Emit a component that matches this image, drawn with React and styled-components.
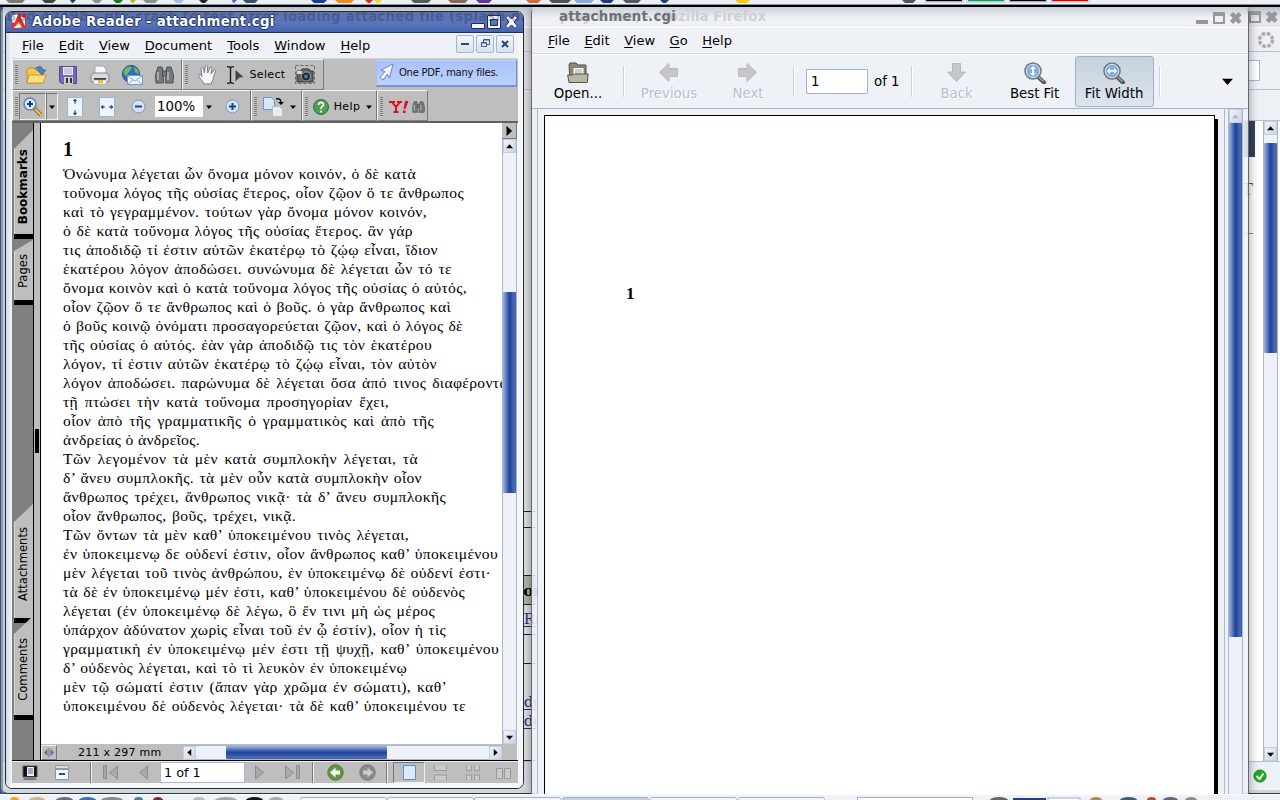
import styled, { createGlobalStyle, css } from 'styled-components';

const GlobalStyle = createGlobalStyle`
  * {
    box-sizing: border-box;
  }
  body {
    margin: 0;
    overflow: hidden;
    font-family: 'DejaVu Sans', sans-serif;
    font-size: 13.33px;
    color: #000;
  }
  svg {
    display: block;
    flex: none;
  }
  u {
    text-underline-offset: 2px;
  }
`;

const Desktop = styled.div`
  position: relative;
  width: 1280px;
  height: 800px;
  overflow: hidden;
  background: #35597f;
`;

/* panels */

const Panel = styled.div`
  position: absolute;
  left: 0;
  right: 0;
  z-index: 5;
  overflow: hidden;
  ${({ $bottom }) =>
    $bottom
      ? css`
          bottom: 0;
          height: 6px;
          background: #eef2f7;
          border-top: 1px solid #fff;
        `
      : css`
          top: 0;
          height: 7px;
          background: #eceff4;
          border-bottom: 2px solid #000;
          box-shadow: inset 0 -1px #7f93ab;
        `}
`;

/* shared window pieces */

const Scroll = styled.div`
  display: flex;
  flex: none;
  flex-direction: ${({ $row }) => ($row ? 'row' : 'column')};
  ${({ $row }) => ($row ? 'height: 15px;' : 'width: 15px;')}
  background: #edf1f7;
  border: 0 solid #a8b8d2;
  border-width: ${({ $row }) => ($row ? '1px 0' : '0 1px')};
`;

const Arrow = styled.div`
  flex: none;
  width: 13px;
  height: 14px;
  display: flex;
  align-items: center;
  justify-content: center;
  background: linear-gradient(135deg, #f4f7fa, #c9d3df);
  box-shadow: inset 0 0 0 1px #c3cfdd;
`;

const Track = styled.div`
  flex: 0 0 ${({ $size }) => $size}px;
`;

const Thumb = styled.div`
  flex: 0 0 ${({ $size }) => $size}px;
  border-radius: 1px;
  background: linear-gradient(
    ${({ $row }) => ($row ? '180deg' : '90deg')},
    #9db1d9 0%,
    #6c88c4 20%,
    #2448a0 46%,
    #2448a0 58%,
    #4c6ab2 85%,
    #3f5ea9 100%
  );
`;

const Spacer = styled.div`
  flex: 1;
`;

function Tri({ dir = 'down', color = '#000', size = 7 }) {
  const turn = { down: 0, left: 90, up: 180, right: 270 }[dir];
  return (
    <svg width={size} height={size} viewBox="0 0 8 8">
      <path
        d="M0 2h8L4 6.5z"
        fill={color}
        transform={`rotate(${turn} 4 4)`}
      />
    </svg>
  );
}

function Bar({ row, before, thumb, dim }) {
  return (
    <Scroll $row={row}>
      <Arrow>
        <Tri dir={row ? 'left' : 'up'} color={dim ? '#aebccb' : '#000'} />
      </Arrow>
      <Track $size={before} />
      <Thumb $size={thumb} $row={row} />
      <Spacer />
      <Arrow>
        <Tri dir={row ? 'right' : 'down'} />
      </Arrow>
    </Scroll>
  );
}

const WindowButtons = ({ children }) => (
  <svg width="50" height="16" viewBox="0 0 50 16">
    {children}
  </svg>
);

const DimButtons = () => (
  <WindowButtons>
    <path d="M2 11h12v4H2z" fill="#96989b" />
    <path fillRule="evenodd" d="M19 3h12v12H19zM21 7v6h8V7z" fill="#96989b" />
    <path d="M37.500 4.500l8.500 9M46 4.500l-8.500 9" stroke="#96989b" strokeWidth="4.500" />
  </WindowButtons>
);

const BrightButtons = () => (
  <WindowButtons>
    <path d="M1.500 10.500h13v5h-13z" fill="#f4f6fa" stroke="#1d2c58" />
    <path
      fillRule="evenodd"
      d="M17.500 2.500h13v13h-13zM20.500 6.500v6h7v-6z"
      fill="#f4f6fa"
      stroke="#1d2c58"
    />
    <path
      d="M35.500 5l2.500-2.500 3.500 3.500 3.500-3.500L47.500 5 44 9l3.500 4-2.500 2.500-3.500-3.500-3.500 3.500L35.500 13 39 9z"
      fill="#f4f6fa"
      stroke="#1d2c58"
    />
  </WindowButtons>
);

/* firefox window in the back */

const FirefoxWindow = styled.div`
  position: absolute;
  left: 1px;
  top: 7px;
  width: 1279px;
  height: 787px;
  display: flex;
  flex-direction: column;
  padding-bottom: 4px;
  background: #cdd4dc;
  border-left: 2px solid #8e98a6;
  border-radius: 6px 0 0 6px;
  border-bottom: 1px solid #30363d;
`;

const FirefoxTitle = styled.div`
  flex: none;
  height: 21px;
  display: flex;
  align-items: center;
  padding: 0 0 2px;
  background: linear-gradient(#b8c1cb, #e4e8ee 60%);
  border-bottom: 1px solid #f9fafb;
`;

const FirefoxBar = styled.div`
  flex: none;
  height: ${({ $h }) => $h}px;
  display: flex;
  align-items: center;
  justify-content: flex-end;
  padding-right: ${({ $pr }) => $pr}px;
  border-bottom: 1px solid #b5c0cd;
  background: linear-gradient(90deg, #dde0e4 80%, #edf0f5 98.5%);
`;

const UrlEnd = styled.div`
  width: 40px;
  height: 21px;
  background: #fff;
  border: 1px solid #a8b8d2;
`;

const FirefoxPage = styled.div`
  flex: 1;
  display: flex;
  justify-content: space-between;
  background: linear-gradient(90deg, #c3cad6 10px, #fff 10px);
  padding: 0 2px 0 10px;
`;

const PageLeft = styled.div`
  width: 535px;
  margin-top: -25px;
  background: #dfdfdf;
`;

const PageRow = styled.div`
  height: ${({ $h }) => $h}px;
  padding: ${({ $top }) => $top || 0}px 0 0 ${({ $indent }) => $indent || 506}px;
  border-bottom: 1px solid #222;
  background: ${({ $head }) => ($head ? '#b2b2b2' : 'transparent')};
  font-family: 'DejaVu Serif', serif;
  font-size: 15px;
  line-height: 19px;
  font-weight: ${({ $head }) => ($head ? 'bold' : 'normal')};
  white-space: nowrap;
  overflow: hidden;
  u {
    color: #12388c;
    display: block;
  }
`;

const PageRight = styled.div`
  display: flex;
`;

const PageEdge = styled.div`
  width: 30px;
  margin-right: 8px;
  font-family: 'DejaVu Serif', serif;
  font-size: 16px;
  text-align: right;
  padding-right: 2px;
  &::before {
    content: '';
    display: block;
    height: 36px;
    margin-right: -2px;
    background: #344260;
  }
  div {
    height: 77px;
    padding-top: 23px;
    color: #555;
    border-bottom: 1px solid #888;
  }
`;

const FirefoxStatus = styled.div`
  flex: none;
  height: 29px;
  display: flex;
  align-items: center;
  justify-content: flex-end;
  padding-right: 13px;
  border-top: 1px solid #b8c2cd;
  background: linear-gradient(90deg, #d5d9de 80%, #edf0f5 98.5%);
`;

/* document viewer */

const ViewerWindow = styled.div`
  position: absolute;
  left: 531px;
  top: 7px;
  width: 718px;
  height: 787px;
  display: flex;
  flex-direction: column;
  border: 1px solid #666a6e;
  border-width: 0 1px;
  border-radius: 6px 6px 0 0;
  background: linear-gradient(
    90deg,
    rgba(238, 242, 247, 0.78),
    #eef2f7 7px,
    #eef2f7 708px,
    rgba(238, 242, 247, 0.85)
  );
  box-shadow: 0 0 10px rgba(0, 0, 0, 0.4);
`;

const ViewerTitle = styled.div`
  flex: none;
  height: 21px;
  display: flex;
  align-items: center;
  padding: 0 4px 1px 0;
  font-weight: bold;
  white-space: pre;
  color: #6f7174;
  background: linear-gradient(#c8cfd6, rgba(238, 242, 247, 0.1) 55%);
  border-bottom: 1px solid #fff;
  span {
    margin-left: 27px;
    letter-spacing: 0.22px;
    z-index: 1;
  }
  i {
    width: 234px;
    margin-right: -234px;
    font-style: normal;
    text-align: right;
    color: #cdd0d5;
  }
`;

const Menu = styled.div`
  flex: none;
  height: ${({ $h }) => $h}px;
  display: flex;
  align-items: center;
  gap: ${({ $gap }) => $gap || 15}px;
  padding: 0 4px ${({ $pb }) => $pb || 0}px ${({ $left }) => $left}px;
  font-size: 13px;
  background: #eef2f7;
  border-bottom: 1px solid #cfd7e1;
`;

const ViewerTools = styled.div`
  flex: none;
  height: 55px;
  display: flex;
  align-items: center;
  padding-left: 14px;
  border-top: 1px solid #fff;
  border-bottom: 1px solid #a5b5c5;
  background: #eef2f7;
`;

const BigButton = styled.div`
  flex: none;
  width: ${({ $w }) => $w}px;
  margin-left: ${({ $ml }) => $ml || 0}px;
  height: 51px;
  display: flex;
  flex-direction: column;
  align-items: center;
  padding-top: 5px;
  line-height: 16px;
  border: 1px solid transparent;
  border-radius: 3px;
  svg {
    margin-bottom: 2px;
  }
  ${({ $off }) =>
    $off &&
    css`
      color: #b3c0ce;
      text-shadow: 1px 1px #fff;
    `}
  ${({ $on }) =>
    $on &&
    css`
      border-color: #9fb0c8;
      background: linear-gradient(#c6d1dd, #dde6ef);
    `}
`;

const Divider = styled.div`
  flex: none;
  width: 2px;
  height: 31px;
  margin-left: ${({ $ml }) => $ml}px;
  border-left: 1px solid #cbd4de;
  background: #fff;
`;

const PageInput = styled.div`
  width: 62px;
  height: 25px;
  margin: 0 6px 1px 11px;
  padding: 3px 4px;
  line-height: 17px;
  background: #fff;
  border: 1px solid #a2b2d2;
  border-radius: 1px;
`;

const ViewerBody = styled.div`
  flex: 1;
  min-height: 0;
  display: flex;
  margin: 0 5px;
`;

const ViewerPane = styled.div`
  width: 688px;
  padding: 6px 6px 0 6px;
  border: 1px solid #a8b8d2;
  border-width: 0 1px;
  margin-right: 3px;
`;

const Sheet = styled.div`
  height: 100%;
  width: 671px;
  padding: 168px 0 0 81px;
  background: #fff;
  border: 1px solid #000;
  border-bottom: 0;
  box-shadow: 3px 4px #000;
  clip-path: inset(0 -4px 0 0);
  font: bold 17px/20px 'Liberation Serif', serif;
`;

/* adobe reader */

const ReaderWindow = styled.div`
  position: absolute;
  left: 5px;
  top: 11px;
  width: 519px;
  height: 778px;
  z-index: 3;
  display: flex;
  flex-direction: column;
  border: 1px solid #252a33;
  border-radius: 7px;
  overflow: hidden;
  background: #eef2f7;
`;

const ReaderTitle = styled.div`
  flex: none;
  height: 21px;
  display: flex;
  align-items: center;
  padding: 0 3px 2px 6px;
  color: #fff;
  font-weight: bold;
  letter-spacing: 0.28px;
  background: linear-gradient(#5d72ab, #5b75bd 55%, #4763af);
  border-bottom: 1px solid #1f2f55;
  text-shadow:
    1px 0 #26386b,
    -1px 0 #26386b,
    0 1px #26386b,
    0 -1px #26386b;
  span {
    margin-left: 6px;
    z-index: 1;
  }
`;

const Ghost = styled.div`
  position: absolute;
  top: -4px;
  left: 0;
  width: 741px;
  height: 18px;
  line-height: 18px;
  text-align: right;
  white-space: pre;
  font-weight: bold;
  letter-spacing: 0.25px;
  text-shadow: none;
  color: rgba(25, 35, 70, 0.3);
`;

const ReaderBody = styled.div`
  flex: 1;
  display: flex;
  flex-direction: column;
  padding: 0 5px 5px 6px;
  background: linear-gradient(90deg, #d2d9e4, #f4f6fa 6px);
`;

const MdiButton = styled.div`
  width: 18px;
  height: 18px;
  display: flex;
  align-items: center;
  justify-content: center;
  border: 1px solid #a7b6cd;
  border-radius: 2px;
  background: linear-gradient(#f5f7fa, #d8e0ea);
`;

const MdiGroup = styled.div`
  display: flex;
  gap: 2px;
  margin: 0 0 3px auto;
`;

const ToolRow = styled.div`
  flex: none;
  height: 31px;
  display: flex;
  align-items: stretch;
  background: #bebebe;
`;

const Group = styled.div`
  flex: none;
  width: ${({ $w }) => $w}px;
  display: flex;
  align-items: center;
  padding-top: ${({ $low }) => ($low ? 2 : 0)}px;
  font-size: 11px;
  border: 1px solid;
  border-color: #f4f4f4 #777 #808080 #f4f4f4;
`;

const Grip = styled.div`
  flex: none;
  width: 3px;
  height: 20px;
  margin: 0 1px 0 2px;
  background: repeating-linear-gradient(#777 0 1px, #c8c8c8 1px 2px);
`;

const Slot = styled.div`
  flex: none;
  width: ${({ $w }) => $w}px;
  height: ${({ $pressed }) => ($pressed ? `${$pressed}px` : 'auto')};
  margin-left: ${({ $ml }) => $ml || 0}px;
  display: flex;
  align-items: center;
  justify-content: center;
  letter-spacing: 0.35px;
  ${({ $pressed }) =>
    $pressed &&
    css`
      border: 1px solid;
      border-color: #777 #eee #eee #777;
    `}
`;

const Zoom = styled.div`
  width: 48px;
  height: 21px;
  margin-left: 1px;
  padding-left: 2px;
  line-height: 21px;
  font-size: 13.33px;
  background: #fff;
`;

const Promo = styled.div`
  width: 141px;
  height: 27px;
  margin: 1px 1px 0 auto;
  display: flex;
  align-items: center;
  gap: 5px;
  padding: 0 0 2px 2px;
  font-size: 10px;
  letter-spacing: -0.25px;
  color: #111;
  white-space: nowrap;
  background: linear-gradient(#a9c2fb, #bdd1fd);
  border: 1px solid;
  border-color: #bfd2ff #6d8fd0 #7897d0 #a3bdf5;
  border-bottom-width: 2px;
`;

const Main = styled.div`
  height: 640px;
  flex: none;
  display: flex;
  border-top: 2px solid #626262;
  border-bottom: 1px solid #000;
`;

const Tabs = styled.div`
  width: 22px;
  padding: 7px 0 0 2px;
  background: #808080;
  border-right: 1px solid #000;
`;

const Tab = styled.div`
  height: ${({ $h }) => $h}px;
  margin-top: ${({ $gap }) => $gap || 0}px;
  display: flex;
  align-items: flex-end;
  justify-content: center;
  padding-bottom: ${({ $pb }) => $pb}px;
  font-size: ${({ $bold }) => ($bold ? 12 : 11.6)}px;
  font-weight: ${({ $bold }) => ($bold ? 'bold' : 'normal')};
  background: linear-gradient(90deg, #d8d8d8 1px, #bebebe 1px);
  border-bottom: 5px solid #000;
  clip-path: polygon(
    0 ${({ $cut }) => $cut}px,
    100% 0,
    100% 100%,
    0 100%
  );
  span {
    writing-mode: vertical-rl;
    transform: rotate(180deg);
    line-height: 17px;
  }
`;

const Splitter = styled.div`
  width: 7px;
  padding: 306px 1px 0 1px;
  background: #bdbdbd;
  border-right: 1px solid #000;
  &::before {
    content: '';
    display: block;
    height: 24px;
    background: #000;
  }
`;

const PaneColumn = styled.div`
  width: 461px;
  display: flex;
  flex-direction: column;
`;

const Paper = styled.div`
  height: 621px;
  padding: 16px 0 0 22px;
  overflow: hidden;
  background: #fff;
  font-family: 'Liberation Serif', 'DejaVu Serif', serif;
`;

const Heading = styled.div`
  font-size: 20px;
  font-weight: bold;
  line-height: 20px;
  margin-bottom: 4.6px;
`;

const Line = styled.div`
  width: ${({ $w }) => $w}px;
  height: 19.04px;
  line-height: 19px;
  font-size: 15.6px;
  letter-spacing: 0.35px;
  white-space: nowrap;
  text-align-last: justify;
`;

const PaneFoot = styled.div`
  height: 16px;
  display: flex;
  align-items: center;
  background: #bebebe;
  font-size: 11px;
  letter-spacing: 0.25px;
  > span {
    width: 126px;
    padding-left: 21px;
    white-space: nowrap;
  }
`;

const SplitButton = styled.div`
  width: 16px;
  height: 15px;
  display: flex;
  align-items: center;
  justify-content: center;
  border: 1px solid;
  border-color: #eee #777 #777 #eee;
`;

const ScrollColumn = styled.div`
  width: 15px;
  display: flex;
  flex-direction: column;
  background: #bebebe;
  > ${Scroll} {
    height: 605px;
  }
`;

const HWrap = styled.div`
  width: 319px;
  > ${Scroll} {
    width: 100%;
  }
`;

const MoreButton = styled.div`
  height: 16px;
  display: flex;
  align-items: center;
  justify-content: center;
  border-right: 1px solid #777;
  border-bottom: 1px solid #777;
`;

const StatusRow = styled.div`
  height: 22px;
  display: flex;
  align-items: center;
  background: #bebebe;
  border-top: 1px solid #eee;
`;

const StatusField = styled.div`
  flex: none;
  width: 85px;
  height: 21px;
  margin-left: 5px;
  padding-left: 3px;
  line-height: 20px;
  font-size: 12.8px;
  background: #fff;
  border: 1px solid #a8b8d2;
`;

const StatusDivider = styled.div`
  flex: none;
  width: 2px;
  height: 21px;
  margin-left: ${({ $ml }) => $ml || 0}px;
  border-left: 1px solid #777;
  background: #f2f2f2;
`;

/* icons */

const OpenIcon = () => (
  <svg width="21" height="20" viewBox="0 0 21 20">
    <path d="M1 5l2-2h5l2 2h7v13H1z" fill="#f3c94d" stroke="#c1902a" />
    <path d="M3 10h17l-3 8H1z" fill="#fbe27f" stroke="#c9992e" />
    <path d="M9 4c3-4 8-3 8 1h3l-4 5-5-5h3c0-2-3-2-5-1z" fill="#4d80bd" stroke="#285a96" strokeWidth=".6" />
  </svg>
);

const SaveIcon = () => (
  <svg width="18" height="18" viewBox="0 0 18 18">
    <path d="M.5.500h17v17h-15l-2-2z" fill="#7468b8" stroke="#54488f" />
    <path d="M4 1h10v8H4z" fill="#e9e8f2" />
    <path d="M5 3h8M5 5h8M5 7h8" stroke="#aaa6c4" />
    <path d="M5 11h9v7H5z" fill="#ccc" />
    <path d="M7 12h2v5H7zM11 12h2v5h-2z" fill="#333" />
  </svg>
);

const PrintIcon = () => (
  <svg width="20" height="20" viewBox="0 0 20 20">
    <path d="M5 1h8l3 3v6H5z" fill="#f7f9fc" stroke="#9fa7b4" />
    <path d="M3 8h14l2 3v6H1v-6z" fill="#d7dae0" stroke="#85888f" />
    <path d="M4 13h12v2H4z" fill="#444" />
    <path d="M4 15h12l1 4H3z" fill="#fff" stroke="#999" strokeWidth=".6" />
    <path d="M8 15h5v3H8z" fill="#eab93a" />
  </svg>
);

const MailIcon = () => (
  <svg width="21" height="20" viewBox="0 0 21 20">
    <circle cx="9" cy="9" r="8.500" fill="#2d70ba" stroke="#1c4b82" />
    <path d="M3 4c3-3 6-3 7-1L7 7l-3 4c-3-2-3-5-1-7zM12 2c4 1 5 5 5 7l-4-2z" fill="#75b366" />
    <path d="M5.500 10.500h15v9h-15z" fill="#f3f8fd" stroke="#6f9ccd" />
    <path d="M6 11l7 5 7-5M6 19l5-4M20 19l-5-4" stroke="#7fa8d4" fill="none" />
  </svg>
);

const BinocularsIcon = ({ w = 19, h = 18 }) => (
  <svg width={w} height={h} viewBox="0 0 19 18">
    <g fill="#76797c" stroke="#4f5254">
      <path d="M3 1h4l1 4 .5 12H1L.5 9zM12 1h4l2.500 8-.5 8h-7.500L11 5z" />
      <path d="M7.500 5h4v5h-4z" />
    </g>
    <path d="M3 6v8M13 6v8" stroke="#b9bcbf" strokeWidth="1.500" />
  </svg>
);

const HandIcon = () => (
  <svg width="19" height="20" viewBox="0 0 19 20">
    <path
      d="M6 19c-1-3-5-6-5.500-9 0-1.500 2-1 3.500 1.500L3 4c0-2 2-2 2.500 0l1 4L7 2c0-2 2.500-2 2.500 0l.2 6L12 3c.5-2 2.500-1 2 .5L13 9l2.500-3.500c1-1.500 2.800-.5 2 1-1 2-2 5-2.500 8l-2 4.500z"
      fill="#f6f6f8"
      stroke="#777b86"
    />
  </svg>
);

const SelectIcon = () => (
  <svg width="17" height="18" viewBox="0 0 17 18">
    <path d="M0 .7c2 0 3.500 0 3.500 1.300v14C3.500 17.300 2 17.300 0 17.300M7 .7C5 .7 3.500.7 3.500 2M3.500 16c0 1.300 1.500 1.300 3.500 1.300" fill="none" stroke="#111" strokeWidth="1.300" />
    <path d="M8.500 4l8 7-4 .5-4 4z" fill="#444" />
  </svg>
);

const SnapshotIcon = () => (
  <svg width="21" height="20" viewBox="0 0 21 20">
    <path d="M.5.500h19v18H.5z" fill="none" stroke="#666" strokeDasharray="3 2" />
    <path d="M2 6h4l1-2h7l1 2h3v11H2z" fill="#62666d" stroke="#333" />
    <path d="M2 6h5v3H2z" fill="#d7dadd" />
    <circle cx="11" cy="11.500" r="4.500" fill="#20242a" stroke="#9da2aa" />
    <circle cx="11" cy="11.500" r="2" fill="#5277b4" />
  </svg>
);

const ZoomInIcon = () => (
  <svg width="20" height="20" viewBox="0 0 20 20">
    <path d="M11 11l7 7" stroke="#9b6d20" strokeWidth="4" />
    <path d="M12 12l6 6" stroke="#f0c24c" strokeWidth="2" />
    <circle cx="7" cy="7" r="6" fill="#dbe9fb" stroke="#6183b4" strokeWidth="1.500" />
    <path d="M7 4v6M4 7h6" stroke="#173f83" strokeWidth="2" />
  </svg>
);

const FitIcon = ({ wide }) => (
  <svg width="17" height="20" viewBox="0 0 17 20">
    <path d="M.5.500h15v19H.5z" fill="#edf4fd" stroke="#9bb4d6" />
    <g stroke="#245592" fill="#245592">
      {wide ? (
        <path d="M2 10h4M14 10h-4M2 10l2-1.500v3zM14 10l-2-1.500v3z" />
      ) : (
        <path d="M8 2v5M8 18v-5M8 2L6.500 4h3zM8 18l-1.500-2h3z" />
      )}
    </g>
  </svg>
);

const RoundSign = ({ plus }) => (
  <svg width="15" height="15" viewBox="0 0 15 15">
    <circle cx="7.500" cy="7.500" r="6.500" fill="#d4e2f5" stroke="#8099be" />
    <path d={plus ? 'M7.500 4v7M4 7.500h7' : 'M4 7.500h7'} stroke="#174391" strokeWidth="2" />
  </svg>
);

const RotateIcon = () => (
  <svg width="21" height="20" viewBox="0 0 21 20">
    <path d="M.5.500h8l3 3v9H.5z" fill="#d7e6fa" stroke="#6f93c2" />
    <path d="M9.500 9.500h7l3 3v7h-10z" fill="#ededed" stroke="#bbb" />
    <path d="M13 2c4-1 5 1 5 4" fill="none" stroke="#111" strokeWidth="1.500" />
    <path d="M15 5h6l-3 3z" />
  </svg>
);

const HelpIcon = () => (
  <svg width="16" height="16" viewBox="0 0 16 16">
    <circle cx="8" cy="8" r="7.500" fill="#4b9e52" stroke="#2d7235" />
    <path d="M5.500 6c0-3.500 5-3.500 5-.5C10.500 7.500 8 7.500 8 10M8 11.500v2" fill="none" stroke="#fff" strokeWidth="1.700" />
  </svg>
);

const YahooIcon = () => (
  <svg width="20" height="12" viewBox="0 0 20 12">
    <path d="M0 1h6M8 1h5M3 1l4 5 4-5M7 6v5M4.500 11h5" fill="none" stroke="#e00d24" strokeWidth="2" />
    <path d="M16 0h3.500L16.500 8h-2zM14 9.500h2.500V12H14z" fill="#e00d24" />
  </svg>
);

const AdobeIcon = () => (
  <svg width="14" height="15" viewBox="0 0 14 15">
    <path d="M0 1l14-1v14l-14 1z" fill="#e23322" />
    <path d="M0 1l6-.5L2.500 9 0 8z" fill="#fff" />
    <path d="M8.500 2.500L13 4v8z" fill="#fff" />
    <path d="M1.500 14l5-6 3.500 5.500z" fill="#fff" />
    <path d="M3 12.500l3.500-3.500" stroke="#e23322" />
  </svg>
);

const CursorIcon = () => (
  <svg width="15" height="18" viewBox="0 0 15 18">
    <path d="M14 1L2 7l4 1.500-5 6L4 17l4.500-6 2 4z" fill="#f4f5ff" stroke="#7880c9" />
  </svg>
);

const FolderIcon = () => (
  <svg width="22" height="22" viewBox="0 0 22 22">
    <path d="M3 17L2 3l1-2h6l2 2h8v14z" fill="#8d8c78" stroke="#4c4b40" />
    <path d="M6 5.500h11v10H6z" fill="#fff" stroke="#777" />
    <path d="M8 8h7M8 10h7M8 12h7" stroke="#999" />
    <path d="M.7 13h6l1-1h13.500l-1 8.500H2z" fill="#b9b8a5" stroke="#555447" />
  </svg>
);

const BigArrow = ({ turn = 0 }) => (
  <svg width="22" height="22" viewBox="0 0 22 22">
    <path
      d="M1.500 10.500L11 1.500v5h8.500v8H11v5z"
      fill="#c5c7ca"
      stroke="#b6b9bd"
      transform={`rotate(${turn} 10.500 10.500)`}
    />
  </svg>
);

const LensIcon = ({ wide }) => (
  <svg width="24" height="22" viewBox="0 0 24 22">
    <path d="M14 14l7 6.500" stroke="#555850" strokeWidth="4" strokeLinecap="round" />
    <path d="M16 15.500l4.500 4" stroke="#a5a79e" strokeWidth="1.500" />
    <circle cx="10" cy="9" r="8" fill="#85aee0" stroke="#777b76" strokeWidth="1.600" />
    <circle cx="10" cy="9" r="6.700" fill="none" stroke="#d3e3f7" />
    <path
      d="M5 9l3-3v2h4V6l3 3-3 3v-2H8v2z"
      fill="#fff"
      transform={wide ? undefined : 'rotate(90 10 9)'}
    />
  </svg>
);

const ScreenIcon = () => (
  <svg width="17" height="16" viewBox="0 0 17 16">
    <path d="M1 1h14v11H1z" fill="#111" stroke="#555" />
    <path d="M5 2h7v9H5z" fill="#eef" />
    <path d="M6 4h5M6 6h5M6 8h5" stroke="#567" />
    <path d="M3 13h10l2 2H1z" fill="#777" />
  </svg>
);

const FormIcon = () => (
  <svg width="14" height="15" viewBox="0 0 14 15">
    <path d="M.5.500h13v3H.5z" fill="#ddd" stroke="#999" />
    <path d="M.5 4.500h13v10H.5z" fill="#f5f8ff" stroke="#8994a7" />
    <path d="M4 9h6" stroke="#274f9a" strokeWidth="2" />
  </svg>
);

const StepIcon = ({ flip, end }) => (
  <svg width="16" height="15" viewBox="0 0 16 15">
    <g transform={flip ? 'translate(16 0) scale(-1 1)' : undefined} stroke="#8c8c8c" fill="#aaa">
      {end && <path d="M.5.500h3v13h-3z" />}
      <path d={end ? 'M14.500 1v13l-8-6.500z' : 'M12.500 1v13l-8-6.500z'} />
    </g>
  </svg>
);

const NavIcon = ({ on, flip }) => (
  <svg width="17" height="17" viewBox="0 0 17 17">
    <circle cx="8.500" cy="8.500" r="7.700" fill={on ? '#5a9a39' : '#8b8b8b'} stroke={on ? '#4a7a35' : '#777'} />
    <path
      d="M3 8.500L8.500 3.500v3H13v4H8.500v3z"
      fill={on ? '#fff' : '#ccc'}
      transform={flip ? 'rotate(180 8.500 8.500)' : undefined}
    />
  </svg>
);

const SinglePage = () => (
  <svg width="13" height="15" viewBox="0 0 13 15">
    <path d="M.5.500h12v14H.5z" fill="#dceafd" stroke="#5d8dcc" />
  </svg>
);

const Layout = ({ d }) => (
  <svg width="16" height="16" viewBox="0 0 16 16">
    <path d={d} fill="#cacaca" stroke="#999" />
  </svg>
);

const Throbber = () => (
  <svg width="18" height="18" viewBox="0 0 18 18">
    <circle cx="9" cy="9" r="6.500" fill="none" stroke="#a9abad" strokeWidth="3.400" strokeDasharray="3.500 1.600" />
  </svg>
);

const CheckIcon = () => (
  <svg width="14" height="14" viewBox="0 0 14 14">
    <circle cx="7" cy="7" r="6" fill="#1bb01b" stroke="#0b8610" />
    <path d="M3.500 7l3 3 4-5.500" fill="none" stroke="#fff" strokeWidth="2" />
  </svg>
);

/* content */

const GHOST_TITLE =
  'Bug 47498 - gtk-crash to test error loading attached file (splash,display issue) - Mozilla Firefox';

// [text, set width]
const lines = [
  ['Ὁνώνυμα λέγεται ὧν ὄνομα μόνον κοινόν, ὁ δὲ κατὰ', 353],
  ['τοὔνομα λόγος τῆς οὐσίας ἕτερος, οἷον ζῷον ὅ τε ἄνθρωπος', 401],
  ['καὶ τὸ γεγραμμένον. τούτων γὰρ ὄνομα μόνον κοινόν,', 364],
  ['ὁ δὲ κατὰ τοὔνομα λόγος τῆς οὐσίας ἕτερος. ἂν γάρ', 350],
  ['τις ἀποδιδῷ τί ἐστιν αὐτῶν ἑκατέρῳ τὸ ζῴῳ εἶναι, ἴδιον', 375],
  ['ἑκατέρου λόγον ἀποδώσει. συνώνυμα δὲ λέγεται ὧν τό τε', 389],
  ['ὄνομα κοινὸν καὶ ὁ κατὰ τοὔνομα λόγος τῆς οὐσίας ὁ αὐτός,', 404],
  ['οἷον ζῷον ὅ τε ἄνθρωπος καὶ ὁ βοῦς. ὁ γὰρ ἄνθρωπος καὶ', 388],
  ['ὁ βοῦς κοινῷ ὀνόματι προσαγορεύεται ζῷον, καὶ ὁ λόγος δὲ', 400],
  ['τῆς οὐσίας ὁ αὐτός. ἐὰν γὰρ ἀποδιδῷ τις τὸν ἑκατέρου', 369],
  ['λόγον, τί ἐστιν αὐτῶν ἑκατέρῳ τὸ ζῴῳ εἶναι, τὸν αὐτὸν', 374],
  ['λόγον ἀποδώσει. παρώνυμα δὲ λέγεται ὅσα ἀπό τινος διαφέροντα', 445],
  ['τῇ πτώσει τὴν κατὰ τοὔνομα προσηγορίαν ἔχει,', 326],
  ['οἷον ἀπὸ τῆς γραμματικῆς ὁ γραμματικὸς καὶ ἀπὸ τῆς', 371],
  ['ἀνδρείας ὁ ἀνδρεῖος.', 137],
  ['Τῶν λεγομένον τὰ μὲν κατὰ συμπλοκὴν λέγεται, τὰ', 355],
  ['δ’ ἄνευ συμπλοκῆς. τὰ μὲν οὖν κατὰ συμπλοκὴν οἷον', 359],
  ['ἄνθρωπος τρέχει, ἄνθρωπος νικᾷ· τὰ δ’ ἄνευ συμπλοκῆς', 383],
  ['οἷον ἄνθρωπος, βοῦς, τρέχει, νικᾷ.', 233],
  ['Τῶν ὄντων τὰ μὲν καθ’ ὑποκειμένου τινὸς λέγεται,', 346],
  ['ἐν ὑποκειμενῳ δε οὐδενί ἐστιν, οἷον ἄνθρωπος καθ’ ὑποκειμένου', 435],
  ['μὲν λέγεται τοῦ τινὸς ἀνθρώπου, ἐν ὑποκειμένῳ δὲ οὐδενί ἐστι·', 428],
  ['τὰ δὲ ἐν ὑποκειμένῳ μέν ἐστι, καθ’ ὑποκειμένου δὲ οὐδενὸς', 402],
  ['λέγεται (ἐν ὑποκειμένῳ δὲ λέγω, ὃ ἔν τινι μὴ ὡς μέρος', 372],
  ['ὑπάρχον ἀδύνατον χωρὶς εἶναι τοῦ ἐν ᾧ ἐστίν), οἷον ἡ τὶς', 383],
  ['γραμματικὴ ἐν ὑποκειμένῳ μέν ἐστι τῇ ψυχῇ, καθ’ ὑποκειμένου', 436],
  ['δ’ οὐδενὸς λέγεται, καὶ τὸ τὶ λευκὸν ἐν ὑποκειμένῳ', 344],
  ['μὲν τῷ σώματί ἐστιν (ἅπαν γὰρ χρῶμα ἐν σώματι), καθ’', 384],
  ['ὑποκειμένου δὲ οὐδενὸς λέγεται· τὰ δὲ καθ’ ὑποκειμένου τε', 403],
];

// launcher icons cut off by the screen edge: [x, width, color]
const topIcons = [
  [6, 19, '#777a72'], [42, 14, '#3f4a38'], [70, 6, '#26396c'], [92, 10, '#8d8d98'],
  [113, 10, '#147a1d'], [130, 6, '#c7aa16'], [143, 15, '#8b8f93'], [173, 11, '#a2bede'],
  [199, 9, '#222'], [232, 5, '#6b5bd2'], [243, 15, '#375173'], [311, 16, '#1d3c8f'],
  [335, 19, '#f18b1a'], [365, 8, '#e02a16'], [374, 8, '#f2d51d'], [411, 20, '#555a5e'],
  [448, 20, '#8b6a50'], [476, 16, '#6130a3'], [526, 15, '#d06a36'], [549, 22, '#4a544a'],
  [574, 20, '#83aadf'], [600, 14, '#213b78'], [623, 18, '#555'], [660, 9, '#1f3f86'],
  [735, 15, '#f7ca12'], [902, 14, '#555'],
];
const topMeters = [[925, '#000'], [967, '#00a651'], [1009, '#000'], [1051, '#e00000']];
const taskIcons = [
  [10, 9, '#f2a51d'], [29, 16, '#c8b98c'], [56, 17, '#656b8c'], [79, 17, '#3277b5'],
  [101, 22, '#888b8e'], [134, 9, '#4e7dab'], [153, 10, '#7d2d32'], [193, 12, '#b9b9b9'],
  [215, 22, '#a5a8ab'], [246, 17, '#161616'], [269, 14, '#a7aaa2'], [990, 18, '#62666b'],
  [1090, 12, '#b28a4b'], [1120, 17, '#495b70'], [1147, 9, '#b4512d'], [1163, 15, '#656a70'],
  [1185, 12, '#8b8f94'],
];
const taskButtons = [300, 387, 474, 562, 650, 738];

function PanelStrips() {
  return (
    <>
      <Panel>
        <svg width="1280" height="5">
          {topIcons.map(([x, w, c]) => (
            <path key={x} d={`M${x} 0h${w}l-3 3h-${w - 6 > 0 ? w - 6 : 1}z`} fill={c} />
          ))}
          {topMeters.map(([x, c]) => (
            <g key={x}>
              <rect x={x} y="-2" width="38" height="4" fill="#fff" stroke="#b9c3d2" />
              <rect x={x + 1} width="36" height="1.200" fill={c} />
            </g>
          ))}
        </svg>
      </Panel>
      <Panel $bottom>
        <svg width="1280" height="5">
          {taskIcons.map(([x, w, c]) => (
            <ellipse key={x} cx={x + w / 2} cy="5" rx={w / 2} ry="3" fill={c} />
          ))}
          {taskButtons.map((x) => (
            <rect
              key={x}
              x={x + 0.5}
              y="2.500"
              width="86"
              height="10"
              rx="2"
              fill={x === 562 ? '#c8d3df' : '#f3f6fa'}
              stroke="#9fb0c8"
            />
          ))}
          <rect x="857.500" y="2.500" width="115" height="10" fill="#fff" stroke="#9fb0c8" />
          <rect x="1013" y="3" width="33" height="3" fill="#263f82" />
          <rect x="1048" y="3" width="32" height="3" fill="#fff" stroke="#9fb0c8" />
        </svg>
      </Panel>
    </>
  );
}

function Firefox() {
  return (
    <FirefoxWindow>
      <FirefoxTitle>
        <Spacer />
        <DimButtons />
      </FirefoxTitle>
      <FirefoxBar $h={24} $pr={5}>
        <Throbber />
      </FirefoxBar>
      <FirefoxBar $h={38} $pr={20}>
        <UrlEnd />
      </FirefoxBar>
      <FirefoxBar $h={31} $pr={0} />
      <FirefoxPage>
        <PageLeft>
          <PageRow $h={416} />
          <PageRow $h={16} />
          <PageRow $h={48} />
          <PageRow $h={29} $head $top={6} $indent={501}>
            cor
          </PageRow>
          <PageRow $h={30} $top={5}>
            <u>&nbsp;Re</u>
          </PageRow>
          <PageRow $h={29} />
          <PageRow $h={97} $top={29} $indent={501}>
            <u>nde</u>
            <u>nde</u>
          </PageRow>
        </PageLeft>
        <PageRight>
          <PageEdge>
            <div>T</div>
          </PageEdge>
          <Bar before={8} thumb={210} />
        </PageRight>
      </FirefoxPage>
      <FirefoxStatus>
        <CheckIcon />
      </FirefoxStatus>
    </FirefoxWindow>
  );
}

function Viewer() {
  return (
    <ViewerWindow>
      <ViewerTitle>
        <i>play issue) - Mozilla Firefox</i>
        <span>attachment.cgi</span>
        <Spacer />
        <DimButtons />
      </ViewerTitle>
      <Menu $h={26} $left={16} $pb={1} $gap={14.6}>
        <span><u>F</u>ile</span>
        <span><u>E</u>dit</span>
        <span><u>V</u>iew</span>
        <span><u>G</u>o</span>
        <span><u>H</u>elp</span>
      </Menu>
      <ViewerTools>
        <BigButton $w={64}>
          <FolderIcon />
          Open...
        </BigButton>
        <Divider $ml={13} />
        <BigButton $w={70} $ml={9} $off>
          <BigArrow />
          Previous
        </BigButton>
        <BigButton $w={70} $ml={9} $off>
          <BigArrow turn={180} />
          Next
        </BigButton>
        <Divider $ml={10} />
        <PageInput>1</PageInput>
        of 1
        <Divider $ml={11} />
        <BigButton $w={70} $ml={9} $off>
          <BigArrow turn={-90} />
          Back
        </BigButton>
        <BigButton $w={70} $ml={8}>
          <LensIcon />
          Best Fit
        </BigButton>
        <BigButton $w={79} $ml={5} $on>
          <LensIcon wide />
          Fit Width
        </BigButton>
        <Divider $ml={5} />
        <Spacer />
        <Slot $w={42}>
          <Tri size={11} />
        </Slot>
      </ViewerTools>
      <ViewerBody>
        <ViewerPane>
          <Sheet>1</Sheet>
        </ViewerPane>
        <Scroll>
          <Arrow>
            <Tri dir="up" color="#aebccb" />
          </Arrow>
          <Thumb $size={514} />
        </Scroll>
      </ViewerBody>
    </ViewerWindow>
  );
}

function ReaderTools() {
  return (
    <>
      <ToolRow>
        <Group $w={170}>
          <Grip />
          <Slot $w={34}><OpenIcon /></Slot>
          <Slot $w={30}><SaveIcon /></Slot>
          <Slot $w={34}><PrintIcon /></Slot>
          <Slot $w={30}><MailIcon /></Slot>
          <Slot $w={34}><BinocularsIcon /></Slot>
        </Group>
        <Group $w={142}>
          <Grip />
          <Slot $w={36}><HandIcon /></Slot>
          <Slot $w={20}><SelectIcon /></Slot>
          <Slot $w={45}>Select</Slot>
          <Slot $w={30}><SnapshotIcon /></Slot>
        </Group>
        <Promo>
          <CursorIcon />
          One PDF, many files.
        </Promo>
      </ToolRow>
      <ToolRow>
        <Group $w={239} $low>
          <Grip />
          <Slot $w={27} $pressed={27}><ZoomInIcon /></Slot>
          <Slot $w={12} $pressed={27}><Tri size={6} /></Slot>
          <Slot $w={34}><FitIcon /></Slot>
          <Slot $w={31}><FitIcon wide /></Slot>
          <Slot $w={31}><RoundSign /></Slot>
          <Zoom>100%</Zoom>
          <Slot $w={12}><Tri size={6} /></Slot>
          <Slot $w={34}><RoundSign plus /></Slot>
        </Group>
        <Group $w={51} $low>
          <Grip />
          <Slot $w={30}><RotateIcon /></Slot>
          <Slot $w={9}><Tri size={6} /></Slot>
        </Group>
        <Group $w={75} $low>
          <Grip />
          <Slot $w={24}><HelpIcon /></Slot>
          <Slot $w={28}>Help</Slot>
          <Slot $w={15}><Tri size={6} /></Slot>
        </Group>
        <Group $w={51} $low>
          <Grip />
          <Slot $w={29}><YahooIcon /></Slot>
          <Slot $w={10}><BinocularsIcon w={13} h={12} /></Slot>
        </Group>
      </ToolRow>
    </>
  );
}

function Reader() {
  return (
    <ReaderWindow>
      <ReaderTitle>
        <Ghost>{GHOST_TITLE}</Ghost>
        <AdobeIcon />
        <span>Adobe Reader - attachment.cgi</span>
        <Spacer />
        <BrightButtons />
      </ReaderTitle>
      <ReaderBody>
        <Menu $h={26} $left={10} $pb={1}>
          <span><u>F</u>ile</span>
          <span><u>E</u>dit</span>
          <span><u>V</u>iew</span>
          <span><u>D</u>ocument</span>
          <span><u>T</u>ools</span>
          <span><u>W</u>indow</span>
          <span><u>H</u>elp</span>
          <MdiGroup>
            <MdiButton>
              <svg width="8" height="8"><path d="M0 4h8" stroke="#234585" strokeWidth="2" /></svg>
            </MdiButton>
            <MdiButton>
              <svg width="9" height="9" fill="none" stroke="#33599c">
                <path d="M2.500 3V.500h6v5H6M.5 3.500h5v4h-5zM0 4h6M3 1h6" />
              </svg>
            </MdiButton>
            <MdiButton>
              <svg width="8" height="8"><path d="M1 1l6 6M7 1L1 7" stroke="#234585" strokeWidth="2" /></svg>
            </MdiButton>
          </MdiGroup>
        </Menu>
        <ReaderTools />
        <Main>
          <Tabs>
            <Tab $h={109} $cut={19} $pb={10} $bold><span>Bookmarks</span></Tab>
            <Tab $h={65} $gap={1} $cut={11} $pb={12}><span>Pages</span></Tab>
            <Tab $h={119} $gap={199} $cut={18} $pb={17}><span>Attachments</span></Tab>
            <Tab $h={104} $gap={-7} $cut={18} $pb={14}><span>Comments</span></Tab>
          </Tabs>
          <Splitter />
          <PaneColumn>
            <Paper>
              <Heading>1</Heading>
              {lines.map(([text, width]) => (
                <Line key={text} $w={width}>{text}</Line>
              ))}
            </Paper>
            <PaneFoot>
              <SplitButton>
                <svg width="10" height="9">
                  <path d="M0 4.500L3.500 1v7zM10 4.500L6.500 1v7zM4.500 0h1v9h-1z" fill="#5c7196" />
                </svg>
              </SplitButton>
              <span>211 x 297 mm</span>
              <HWrap>
                <Bar row before={30} thumb={161} />
              </HWrap>
            </PaneFoot>
          </PaneColumn>
          <ScrollColumn>
            <MoreButton>
              <Tri dir="right" size={10} />
            </MoreButton>
            <Bar before={139} thumb={201} />
          </ScrollColumn>
        </Main>
        <StatusRow>
          <Slot $w={36}><ScreenIcon /></Slot>
          <Slot $w={28}><FormIcon /></Slot>
          <StatusDivider $ml={14} />
          <Slot $w={38}><StepIcon end /></Slot>
          <Slot $w={25}><StepIcon /></Slot>
          <StatusField>1 of 1</StatusField>
          <Slot $w={30}><StepIcon flip /></Slot>
          <Slot $w={34}><StepIcon flip end /></Slot>
          <StatusDivider $ml={3} />
          <Slot $w={42}><NavIcon on /></Slot>
          <Slot $w={22}><NavIcon flip /></Slot>
          <StatusDivider $ml={8} />
          <Slot $w={32} $ml={5} $pressed={21}><SinglePage /></Slot>
          <Slot $w={32}><Layout d="M1.500.5v5h12v-5M1.500 15v-5h12v5" /></Slot>
          <Slot $w={32}><Layout d="M1.500.5v5h5v-5M9.500.5v5h5v-5M1.500 15v-5h5v5M9.500 15v-5h5v5" /></Slot>
          <Slot $w={30}><Layout d="M.5 3.500h6v10h-6zM8.500 3.500h6v10h-6z" /></Slot>
        </StatusRow>
      </ReaderBody>
    </ReaderWindow>
  );
}

export default function App() {
  return (
    <Desktop>
      <GlobalStyle />
      <Firefox />
      <Viewer />
      <Reader />
      <PanelStrips />
    </Desktop>
  );
}
